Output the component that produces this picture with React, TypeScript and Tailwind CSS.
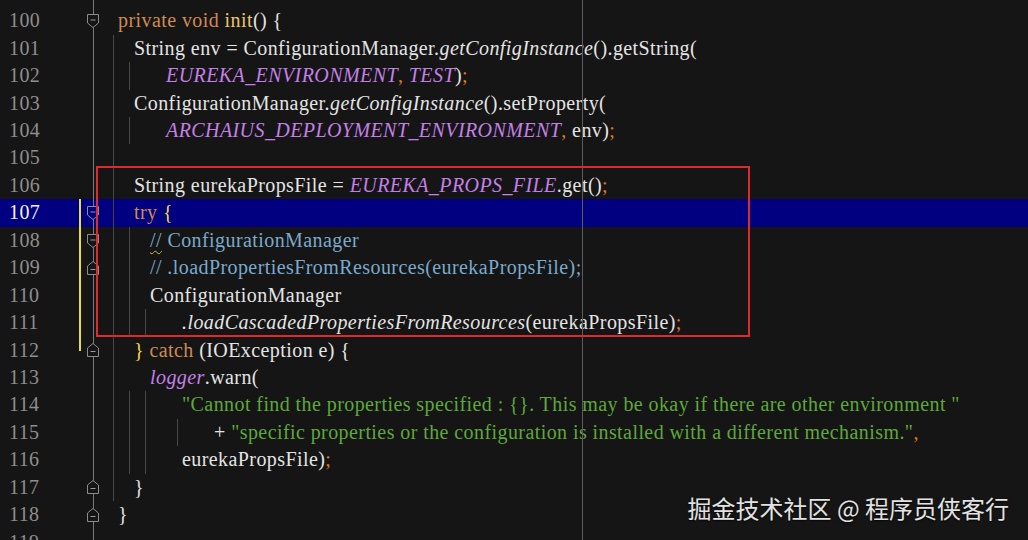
import React from "react";

type Tok = [string, string];

const D = "text-[#e4e4e4]";
const K = "text-[#d08a52]";
const FN = "text-[#e8c56c]";
const C = "italic text-[#c480e6]";
const I = "italic text-[#e4e4e4]";
const P = "text-[#d9782f]";
const Y = "text-[#f2d84a]";
const CM = "text-[#79aacd]";
const S = "text-[#5ea83c]";
const WAVY = "text-[#79aacd] underline decoration-wavy decoration-[#c9b84a] decoration-1 underline-offset-[3px]";

type Line = {
  n: number;
  indent: number;
  toks: Tok[];
  fold?: "down" | "up";
  guides: number[];
  change?: "full" | "half";
};

const lines: Line[] = [
  { n: 100, indent: 0, fold: "down", guides: [], toks: [["private void ", K], ["init", FN], ["() {", D]] },
  { n: 101, indent: 1, guides: [0], toks: [["String env = ConfigurationManager.", D], ["getConfigInstance", I], ["().getString(", D]] },
  { n: 102, indent: 3, guides: [0, 1], toks: [["EUREKA_ENVIRONMENT", C], [", ", P], ["TEST", C], [")", D], [";", P]] },
  { n: 103, indent: 1, guides: [0], toks: [["ConfigurationManager.", D], ["getConfigInstance", I], ["().setProperty(", D]] },
  { n: 104, indent: 3, guides: [0, 1], toks: [["ARCHAIUS_DEPLOYMENT_ENVIRONMENT", C], [",", P], [" env)", D], [";", P]] },
  { n: 105, indent: 1, guides: [0], toks: [] },
  { n: 106, indent: 1, guides: [0], toks: [["String eurekaPropsFile = ", D], ["EUREKA_PROPS_FILE", C], [".get()", D], [";", P]] },
  { n: 107, indent: 1, fold: "down", guides: [0], change: "full", toks: [["try ", K], ["{", Y]] },
  { n: 108, indent: 2, fold: "down", guides: [0, 1], change: "full", toks: [["//", WAVY], [" ConfigurationManager", CM]] },
  { n: 109, indent: 2, fold: "up", guides: [0, 1], change: "full", toks: [["// .loadPropertiesFromResources(eurekaPropsFile);", CM]] },
  { n: 110, indent: 2, guides: [0, 1], change: "full", toks: [["ConfigurationManager", D]] },
  { n: 111, indent: 4, guides: [0, 1, 2], change: "full", toks: [[".loadCascadedPropertiesFromResources", I], ["(eurekaPropsFile)", D], [";", P]] },
  { n: 112, indent: 1, fold: "up", guides: [0], change: "half", toks: [["}", Y], [" catch", K], [" (IOException e) {", D]] },
  { n: 113, indent: 2, guides: [0], toks: [["logger", C], [".warn(", D]] },
  {
    n: 114,
    indent: 4,
    guides: [0, 1, 2],
    toks: [['"Cannot find the properties specified : {}. This may be okay if there are other environment "', S]],
  },
  {
    n: 115,
    indent: 6,
    guides: [0, 1, 2, 4],
    toks: [["+ ", D], ['"specific properties or the configuration is installed with a different mechanism."', S], [",", P]],
  },
  { n: 116, indent: 4, guides: [0, 1, 2], toks: [["eurekaPropsFile)", D], [";", P]] },
  { n: 117, indent: 1, fold: "up", guides: [0], toks: [["}", D]] },
  { n: 118, indent: 0, fold: "up", guides: [], toks: [["}", D]] },
  { n: 119, indent: 0, guides: [], toks: [] },
];

const guideLeft = ["left-[10px]", "left-[26px]", "left-[42px]", "left-[58px]", "left-[74px]"];
const indentPad = [
  "pl-[15px]",
  "pl-[31px]",
  "pl-[47px]",
  "pl-[63px]",
  "pl-[79px]",
  "pl-[95px]",
  "pl-[111px]",
];

const FoldIcon = ({ dir, fill }: { dir: "down" | "up"; fill: string }) => (
  <svg width="14" height="16" viewBox="0 0 14 16" className="relative">
    {dir === "down" ? (
      <>
        <path d="M1.5 1.5 H12.5 V10 L7 14.5 L1.5 10 Z" fill={fill} stroke="#8c8c8c" strokeWidth="1" />
        <path d="M4.5 7 H9.5" stroke="#9a9a9a" strokeWidth="1" />
      </>
    ) : (
      <>
        <path d="M1.5 14.5 H12.5 V6 L7 1.5 L1.5 6 Z" fill={fill} stroke="#8c8c8c" strokeWidth="1" />
        <path d="M4.5 9.5 H9.5" stroke="#9a9a9a" strokeWidth="1" />
      </>
    )}
  </svg>
);

const Gutter = ({ line, current }: { line?: Line; current?: boolean }) => (
  <>
    <div className={`w-[77px] shrink-0 pl-[9px] ${current ? "text-[#f4f4f4]" : "text-[#8e8e8e]"}`}>
      {line ? line.n : ""}
    </div>
    <div className="w-[6px] shrink-0 relative">
      {line?.change === "full" && <div className="absolute left-[2px] top-0 bottom-0 w-[2px] bg-[#e2de4c]" />}
      {line?.change === "half" && <div className="absolute left-[2px] top-0 h-[14px] w-[2px] bg-[#e2de4c]" />}
    </div>
    <div className="w-[20px] shrink-0 relative flex items-center justify-center">
      <div className="absolute left-[10px] top-0 bottom-0 w-px bg-[#7a7a7a]" />
      {line?.fold && <FoldIcon dir={line.fold} fill={current ? "#010080" : "#151515"} />}
    </div>
  </>
);

const Row = ({ line }: { line: Line }) => {
  const current = line.n === 107;
  return (
    <div className={`flex h-[27.45px] leading-[27.45px] ${current ? "bg-[#010080]" : ""}`}>
      <Gutter line={line} current={current} />
      <div className={`relative flex-1 whitespace-pre ${indentPad[line.indent]}`}>
        {line.guides.map((g) => (
          <div key={g} className={`absolute top-0 bottom-0 w-px bg-[#474747] ${guideLeft[g]}`} />
        ))}
        {line.toks.map(([t, cls], i) => (
          <span key={i} className={cls}>
            {t}
          </span>
        ))}
      </div>
    </div>
  );
};

const App = () => {
  return (
    <div className="relative w-[1028px] h-[540px] overflow-hidden bg-[#151515] font-['Liberation_Serif','DejaVu_Serif',serif] text-[20px] tracking-[0.42px]">
      <div className="flex h-[7.3px]">
        <Gutter />
      </div>
      {lines.map((l) => (
        <Row key={l.n} line={l} />
      ))}

      {/* right margin guide */}
      <div className="absolute left-[582px] top-0 h-full w-px bg-[#5c5c5c]" />

      {/* annotation box */}
      <div className="absolute left-[96px] top-[166px] w-[654px] h-[171px] border-2 border-[#dd2a2e]" />

      {/* watermark */}
      <div className="absolute right-[19px] top-[490px] text-[24px] tracking-normal text-[#e2e2e2] font-['Noto_Sans_CJK_SC','Noto_Sans',sans-serif] [text-shadow:0_1px_2px_rgba(0,0,0,0.8)]">
        掘金技术社区 @ 程序员侠客行
      </div>
    </div>
  );
};

export default App;
